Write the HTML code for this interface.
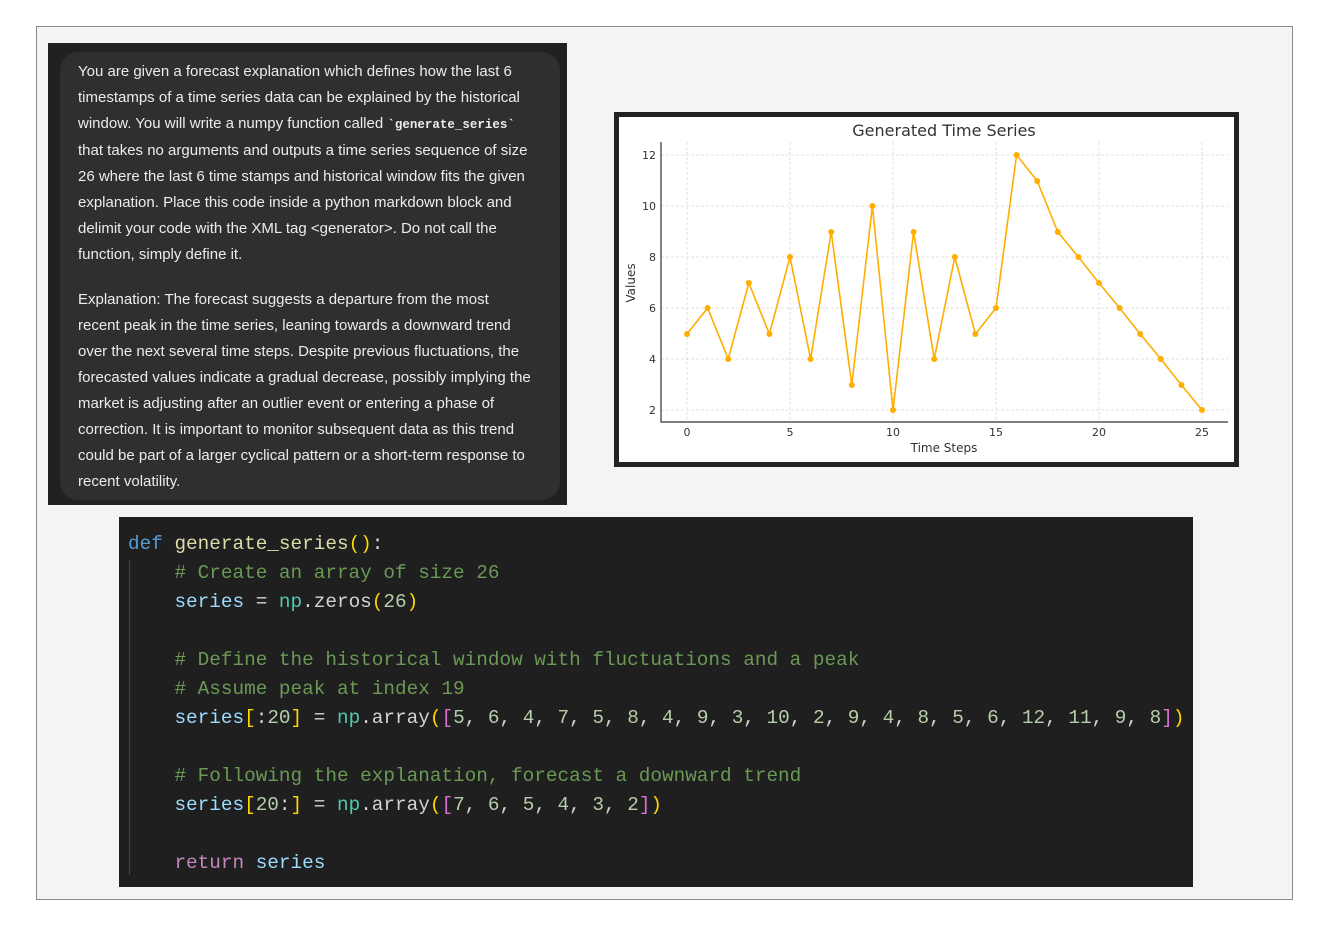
<!DOCTYPE html>
<html><head><meta charset="utf-8"><style>
body{margin:0;width:1329px;height:925px;background:#fff;position:relative;overflow:hidden;font-family:"Liberation Sans",sans-serif}
.outer{position:absolute;left:36px;top:26px;width:1255px;height:872px;border:1px solid #8a8a8a;background:#f4f4f4}
.tp{position:absolute;left:48px;top:43px;width:519px;height:462px;background:#212121}
.tpi{position:absolute;left:60px;top:52px;width:500px;height:448px;background:#2f2f2f;border-radius:18px}
.txt{position:absolute;left:78px;top:59px;width:480px;color:#ececec;font-size:15px;line-height:26px;white-space:nowrap}
.txt p{margin:0}
.txt code{font-family:"Liberation Mono",monospace;font-weight:bold;font-size:12.5px}
.chart{position:absolute;left:614px;top:112px;width:615px;height:345px;border:5px solid #222;background:#fff}
.code{position:absolute;left:119px;top:517px;width:1074px;height:370px;background:#1f1f1f;font-family:"Liberation Mono",monospace;font-size:19.35px;color:#d4d4d4}
.code pre{margin:0;position:absolute;left:9px;top:13px;font:inherit;line-height:29px;white-space:pre}
.k{color:#569cd6}.f{color:#dcdcaa}.c{color:#6a9955}.v{color:#9cdcfe}.m{color:#4ec9b0}.n{color:#b5cea8}.y{color:#ffd700}.p{color:#da70d6}.r{color:#c586c0}
.guide{position:absolute;left:10px;top:43px;width:1px;height:315px;background:#444}
</style></head><body>
<div class="outer"></div>
<div class="tp"></div><div class="tpi"></div>
<div class="txt"><p>You are given a forecast explanation which defines how the last 6<br>timestamps of a time series data can be explained by the historical<br>window. You will write a numpy function called <code>`generate_series`</code><br>that takes no arguments and outputs a time series sequence of size<br>26 where the last 6 time stamps and historical window fits the given<br>explanation. Place this code inside a python markdown block and<br>delimit your code with the XML tag &lt;generator&gt;. Do not call the<br>function, simply define it.</p><p style="margin-top:19px">Explanation: The forecast suggests a departure from the most<br>recent peak in the time series, leaning towards a downward trend<br>over the next several time steps. Despite previous fluctuations, the<br>forecasted values indicate a gradual decrease, possibly implying the<br>market is adjusting after an outlier event or entering a phase of<br>correction. It is important to monitor subsequent data as this trend<br>could be part of a larger cyclical pattern or a short-term response to<br>recent volatility.</p></div>
<div class="chart">
<svg width="615" height="345" viewBox="619 117 615 345" style="position:absolute;left:0;top:0" font-family="DejaVu Sans, sans-serif">
<g stroke="#d8d8d8" stroke-dasharray="3,2" stroke-width="0.8">
<line x1="687" y1="142" x2="687" y2="422"/><line x1="790" y1="142" x2="790" y2="422"/><line x1="893" y1="142" x2="893" y2="422"/><line x1="996" y1="142" x2="996" y2="422"/><line x1="1099" y1="142" x2="1099" y2="422"/><line x1="1202" y1="142" x2="1202" y2="422"/>
<line x1="661" y1="155" x2="1228" y2="155"/><line x1="661" y1="206" x2="1228" y2="206"/><line x1="661" y1="257" x2="1228" y2="257"/><line x1="661" y1="308" x2="1228" y2="308"/><line x1="661" y1="359" x2="1228" y2="359"/><line x1="661" y1="410" x2="1228" y2="410"/>
</g>
<path d="M661 142V422H1228" fill="none" stroke="#333" stroke-width="1.2"/>
<g fill="#333" font-size="11" text-anchor="middle">
<text x="687" y="436">0</text><text x="790" y="436">5</text><text x="893" y="436">10</text><text x="996" y="436">15</text><text x="1099" y="436">20</text><text x="1202" y="436">25</text>
<text x="944" y="452" font-size="12">Time Steps</text>
<text x="944" y="136" font-size="16">Generated Time Series</text>
</g>
<g fill="#333" font-size="11" text-anchor="end">
<text x="656" y="159">12</text><text x="656" y="210">10</text><text x="656" y="261">8</text><text x="656" y="312">6</text><text x="656" y="363">4</text><text x="656" y="414">2</text>
</g>
<text transform="translate(635,283) rotate(-90)" fill="#333" font-size="12" text-anchor="middle">Values</text>
<polyline fill="none" stroke="#ffae00" stroke-width="1.6" points="687,334 707.6,308 728.2,359 748.8,283 769.4,334 790,257 810.6,359 831.2,232 851.8,385 872.4,206 893,410 913.6,232 934.2,359 954.8,257 975.4,334 996,308 1016.6,155 1037.2,181 1057.8,232 1078.4,257 1099,283 1119.6,308 1140.2,334 1160.8,359 1181.4,385 1202,410"/>
<g fill="#ffae00">
<circle cx="687" cy="334" r="3"/><circle cx="707.6" cy="308" r="3"/><circle cx="728.2" cy="359" r="3"/><circle cx="748.8" cy="283" r="3"/><circle cx="769.4" cy="334" r="3"/><circle cx="790" cy="257" r="3"/><circle cx="810.6" cy="359" r="3"/><circle cx="831.2" cy="232" r="3"/><circle cx="851.8" cy="385" r="3"/><circle cx="872.4" cy="206" r="3"/><circle cx="893" cy="410" r="3"/><circle cx="913.6" cy="232" r="3"/><circle cx="934.2" cy="359" r="3"/><circle cx="954.8" cy="257" r="3"/><circle cx="975.4" cy="334" r="3"/><circle cx="996" cy="308" r="3"/><circle cx="1016.6" cy="155" r="3"/><circle cx="1037.2" cy="181" r="3"/><circle cx="1057.8" cy="232" r="3"/><circle cx="1078.4" cy="257" r="3"/><circle cx="1099" cy="283" r="3"/><circle cx="1119.6" cy="308" r="3"/><circle cx="1140.2" cy="334" r="3"/><circle cx="1160.8" cy="359" r="3"/><circle cx="1181.4" cy="385" r="3"/><circle cx="1202" cy="410" r="3"/>
</g>
</svg>
</div>
<div class="code"><div class="guide"></div><pre><span class="k">def</span> <span class="f">generate_series</span><span class="y">()</span>:
    <span class="c"># Create an array of size 26</span>
    <span class="v">series</span> = <span class="m">np</span>.zeros<span class="y">(</span><span class="n">26</span><span class="y">)</span>

    <span class="c"># Define the historical window with fluctuations and a peak</span>
    <span class="c"># Assume peak at index 19</span>
    <span class="v">series</span><span class="y">[</span>:<span class="n">20</span><span class="y">]</span> = <span class="m">np</span>.array<span class="y">(</span><span class="p">[</span><span class="n">5</span>, <span class="n">6</span>, <span class="n">4</span>, <span class="n">7</span>, <span class="n">5</span>, <span class="n">8</span>, <span class="n">4</span>, <span class="n">9</span>, <span class="n">3</span>, <span class="n">10</span>, <span class="n">2</span>, <span class="n">9</span>, <span class="n">4</span>, <span class="n">8</span>, <span class="n">5</span>, <span class="n">6</span>, <span class="n">12</span>, <span class="n">11</span>, <span class="n">9</span>, <span class="n">8</span><span class="p">]</span><span class="y">)</span>

    <span class="c"># Following the explanation, forecast a downward trend</span>
    <span class="v">series</span><span class="y">[</span><span class="n">20</span>:<span class="y">]</span> = <span class="m">np</span>.array<span class="y">(</span><span class="p">[</span><span class="n">7</span>, <span class="n">6</span>, <span class="n">5</span>, <span class="n">4</span>, <span class="n">3</span>, <span class="n">2</span><span class="p">]</span><span class="y">)</span>

    <span class="r">return</span> <span class="v">series</span></pre></div>
</body></html>
